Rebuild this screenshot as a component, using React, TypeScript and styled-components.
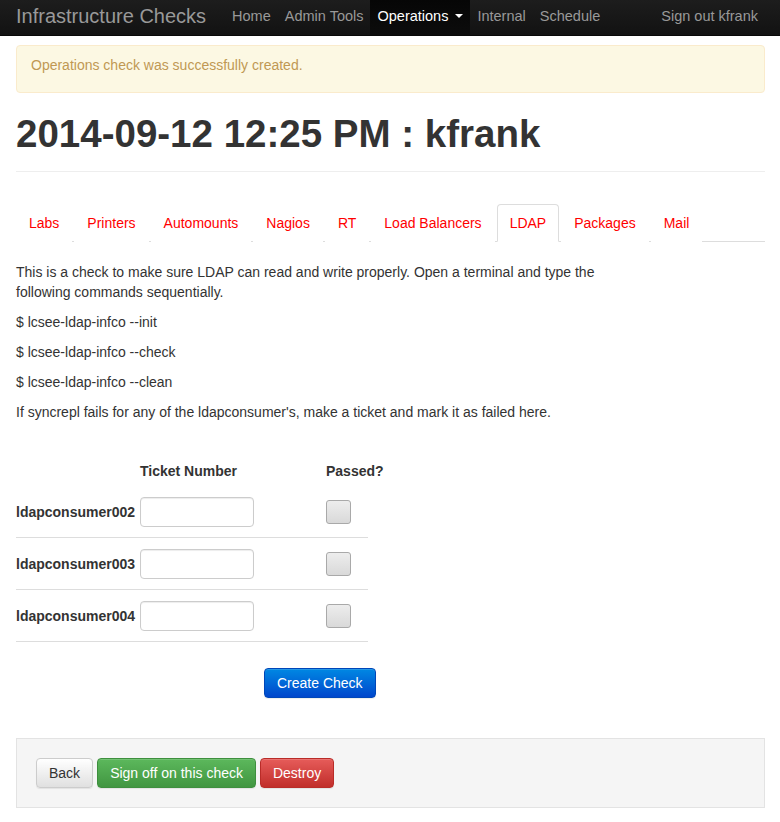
import styled, { createGlobalStyle } from 'styled-components';

const GlobalStyle = createGlobalStyle`
  html, body {
    margin: 0;
    padding: 0;
    background: #fff;
  }
  body {
    font-family: "Liberation Sans", Arial, sans-serif;
    font-size: 14px;
    line-height: 20px;
    color: #333;
  }
  * { box-sizing: border-box; }
`;

const Navbar = styled.nav`
  height: 36px;
  background: linear-gradient(to bottom, #1d1d1d 0%, #121212 100%);
  border-bottom: 1px solid #080808;
`;

const NavInner = styled.div`
  width: 749px;
  margin-left: 16px;
  height: 100%;
  display: flex;
  align-items: stretch;
  font-size: 14.5px;
`;

const Brand = styled.a`
  font-size: 20px;
  color: #999;
  display: flex;
  align-items: center;
  padding-bottom: 3px;
  margin-right: 19px;
  text-decoration: none;
`;

const NavLink = styled.a<{ $active?: boolean }>`
  display: flex;
  align-items: center;
  padding: 0 7px 3px;
  color: ${(p) => (p.$active ? '#fff' : '#999')};
  background: ${(p) => (p.$active ? 'linear-gradient(to bottom, #060606 0%, #0c0c0c 100%)' : 'transparent')};
  text-decoration: none;
  white-space: nowrap;
`;

const Caret = styled.span`
  display: inline-block;
  width: 0;
  height: 0;
  margin-left: 7px;
  border-top: 4px solid #fff;
  border-left: 4px solid transparent;
  border-right: 4px solid transparent;
`;

const Spacer = styled.div`
  flex: 1;
`;

const Container = styled.div`
  width: 749px;
  margin-left: 16px;
`;

const Alert = styled.div`
  margin-top: 9px;
  padding: 9px 14px 17px;
  background: #fcf8e3;
  border: 1px solid #faebcc;
  border-radius: 4px;
  color: #c09853;
`;

const PageHeader = styled.div`
  margin-top: 20px;
  padding-bottom: 17px;
  border-bottom: 1px solid #eee;
`;

const Title = styled.h1`
  margin: 0;
  font-size: 38.5px;
  line-height: 41px;
  font-weight: bold;
  color: #333;
`;

const Tabs = styled.ul`
  margin: 32px 0 0;
  padding: 0;
  list-style: none;
  display: flex;
  border-bottom: 1px solid #ddd;
`;

const Tab = styled.li<{ $active?: boolean }>`
  margin-right: 2px;
  margin-bottom: -1px;
  padding: 8px 12px;
  color: #ff0000;
  border: 1px solid ${(p) => (p.$active ? '#ddd' : 'transparent')};
  border-bottom-color: ${(p) => (p.$active ? '#fff' : 'transparent')};
  border-radius: 4px 4px 0 0;
  background: #fff;
  cursor: pointer;
`;

const Body = styled.div`
  margin-top: 20px;
  width: 610px;
`;

const P = styled.p`
  margin: 0 0 10px;
`;

const Table = styled.div`
  margin-top: 34px;
  width: 352px;
`;

const Row = styled.div<{ $head?: boolean }>`
  display: grid;
  grid-template-columns: 124px 186px 42px;
  align-items: center;
  padding: ${(p) => (p.$head ? '5px 0' : '11px 0 10px')};
  border-bottom: ${(p) => (p.$head ? 'none' : '1px solid #ddd')};
`;

const Th = styled.div`
  font-weight: bold;
`;

const Label = styled.div`
  font-weight: bold;
`;

const Input = styled.input`
  width: 114px;
  height: 30px;
  border: 1px solid #ccc;
  border-radius: 4px;
  box-shadow: inset 0 1px 1px rgba(0, 0, 0, 0.075);
  font: inherit;
  padding: 4px 8px;
`;

const Check = styled.span`
  display: block;
  width: 25px;
  height: 24px;
  border: 1px solid #a9a9a9;
  border-radius: 3px;
  background: linear-gradient(to bottom, #ededed 0%, #d9d9d9 100%);
`;

const SubmitRow = styled.div`
  margin-top: 26px;
  padding-left: 248px;
`;

type Variant = 'default' | 'primary' | 'success' | 'danger';

const variants: Record<Variant, { bg: string; border: string; color: string }> = {
  default: { bg: 'linear-gradient(to bottom, #fff 0%, #e0e0e0 100%)', border: '#ccc', color: '#333' },
  primary: { bg: 'linear-gradient(to bottom, #0088e3 0%, #0046cc 100%)', border: '#0046b8', color: '#fff' },
  success: { bg: 'linear-gradient(to bottom, #5cb85c 0%, #419641 100%)', border: '#3e8f3e', color: '#fff' },
  danger: { bg: 'linear-gradient(to bottom, #e65c5a 0%, #c12e2a 100%)', border: '#b92c28', color: '#fff' },
};

const Button = styled.button<{ $variant: Variant }>`
  display: inline-block;
  height: 30px;
  padding: 0 12px;
  font: inherit;
  font-size: 14px;
  line-height: 28px;
  border-radius: 4px;
  border: 1px solid ${(p) => variants[p.$variant].border};
  background: ${(p) => variants[p.$variant].bg};
  color: ${(p) => variants[p.$variant].color};
  box-shadow: inset 0 1px 0 rgba(255, 255, 255, 0.15), 0 1px 1px rgba(0, 0, 0, 0.075);
  cursor: pointer;
`;

const Well = styled.div`
  margin-top: 40px;
  padding: 19px;
  background: #f5f5f5;
  border: 1px solid #e3e3e3;
  display: flex;
  gap: 4px;
`;

const consumers = ['ldapconsumer002', 'ldapconsumer003', 'ldapconsumer004'];
const tabs = ['Labs', 'Printers', 'Automounts', 'Nagios', 'RT', 'Load Balancers', 'LDAP', 'Packages', 'Mail'];

export default function App() {
  return (
    <>
      <GlobalStyle />
      <Navbar>
        <NavInner>
          <Brand>Infrastructure Checks</Brand>
          <NavLink>Home</NavLink>
          <NavLink>Admin Tools</NavLink>
          <NavLink $active>
            Operations <Caret />
          </NavLink>
          <NavLink>Internal</NavLink>
          <NavLink>Schedule</NavLink>
          <Spacer />
          <NavLink>Sign out kfrank</NavLink>
        </NavInner>
      </Navbar>
      <Container>
        <Alert>Operations check was successfully created.</Alert>
        <PageHeader>
          <Title>2014-09-12 12:25 PM : kfrank</Title>
        </PageHeader>
        <Tabs>
          {tabs.map((t) => (
            <Tab key={t} $active={t === 'LDAP'}>
              {t}
            </Tab>
          ))}
        </Tabs>
        <Body>
          <P>
            This is a check to make sure LDAP can read and write properly. Open a terminal and type the following
            commands sequentially.
          </P>
          <P>$ lcsee-ldap-infco --init</P>
          <P>$ lcsee-ldap-infco --check</P>
          <P>$ lcsee-ldap-infco --clean</P>
          <P>If syncrepl fails for any of the ldapconsumer's, make a ticket and mark it as failed here.</P>
        </Body>
        <Table>
          <Row $head>
            <div />
            <Th>Ticket Number</Th>
            <Th>Passed?</Th>
          </Row>
          {consumers.map((c) => (
            <Row key={c}>
              <Label>{c}</Label>
              <div>
                <Input type="text" />
              </div>
              <Check />
            </Row>
          ))}
        </Table>
        <SubmitRow>
          <Button $variant="primary">Create Check</Button>
        </SubmitRow>
        <Well>
          <Button $variant="default">Back</Button>
          <Button $variant="success">Sign off on this check</Button>
          <Button $variant="danger">Destroy</Button>
        </Well>
      </Container>
    </>
  );
}
